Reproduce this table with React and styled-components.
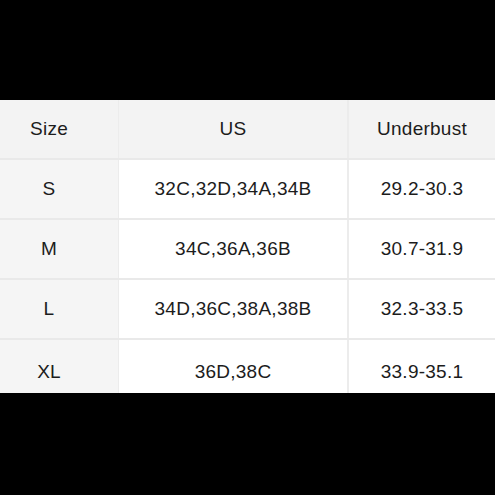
import React from "react";
import styled, { createGlobalStyle } from "styled-components";

const rows = [
  { size: "S", us: "32C,32D,34A,34B", under: "29.2-30.3" },
  { size: "M", us: "34C,36A,36B", under: "30.7-31.9" },
  { size: "L", us: "34D,36C,38A,38B", under: "32.3-33.5" },
  { size: "XL", us: "36D,38C", under: "33.9-35.1" },
];

const GlobalStyle = createGlobalStyle`
  html, body {
    margin: 0;
    padding: 0;
    background: #000;
  }
  body {
    font-family: "Liberation Sans", Arial, sans-serif;
  }
`;

const Page = styled.div`
  width: 495px;
  height: 495px;
  background: #000;
  padding-top: 100px;
  box-sizing: border-box;
`;

// last row runs past the bottom edge of the photo, so the table is clipped
const Table = styled.div`
  height: 293px;
  overflow: hidden;
  background: #e9e9e9;
  display: grid;
  grid-template-columns: 118px 229px 1fr;
  grid-template-rows: repeat(4, 58px) 64px;
  row-gap: 2px;
`;

const Cell = styled.div`
  display: flex;
  align-items: center;
  justify-content: center;
  font-size: 19px;
  letter-spacing: 0.25px;
  color: #1c1c1c;
  background: ${(p) => (p.$head ? "#f3f3f3" : p.$first ? "#f5f5f5" : "#fff")};
  padding-right: ${(p) => (p.$first ? "20px" : "0")};
  border-left: ${(p) => (p.$line ? "2px solid #ececec" : "none")};
  border-left-width: ${(p) => (p.$line === "thin" ? "1px" : "2px")};
`;

export default function App() {
  return (
    <>
      <GlobalStyle />
      <Page>
        <Table>
          <Cell $head $first>Size</Cell>
          <Cell $head $line="thin">US</Cell>
          <Cell $head $line="thick">Underbust</Cell>
          {rows.map((r) => (
            <React.Fragment key={r.size}>
              <Cell $first>{r.size}</Cell>
              <Cell $line="thin">{r.us}</Cell>
              <Cell $line="thick">{r.under}</Cell>
            </React.Fragment>
          ))}
        </Table>
      </Page>
    </>
  );
}
